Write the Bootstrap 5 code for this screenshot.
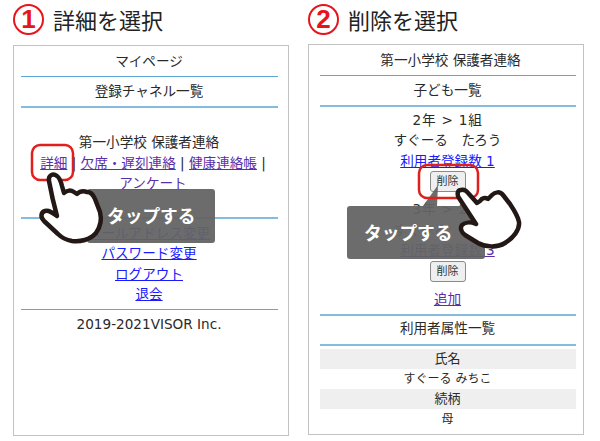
<!DOCTYPE html>
<html lang="ja">
<head>
<meta charset="utf-8">
<title>手順</title>
<link href="https://cdn.jsdelivr.net/npm/bootstrap@5.3.0/dist/css/bootstrap.min.css" rel="stylesheet">
<style>
html,body{height:441px;overflow:hidden;background:#fff}
body{position:relative;font-family:"DejaVu Sans","Noto Sans CJK JP",sans-serif;font-size:13.6px;line-height:20.5px;color:#2a2a2a}
.guide-wrap{padding:4px 16px 0 13px;gap:19px}
.guide-col{width:276px}
.step-head{height:41px;gap:9px}
.step-head-b{height:40px}
.step-num{width:31px;height:31px;border:2px solid #e8141c;border-radius:50%;color:#e8141c;font:700 26px/27px "Liberation Sans",sans-serif}
.step-title{font-family:"Noto Sans CJK JP",sans-serif;font-size:22px;font-weight:400;line-height:30px;color:#222}
.phone{height:391px;border:1.5px solid #c2c2c2;padding:5px 10.5px 0 6.5px;background:#fff}
.phone-b{padding:5px 7.5px 0 10.5px}
.rule{margin:4.5px 0 4px;border:0;border-top:1.5px solid #5ea8d6;opacity:1}
.rule-lg{border-top-width:2px;border-color:#85bbdf}
.rule-tight{margin-bottom:2.5px}
.rule-flush{margin-bottom:2px}
.rule-end{margin:5.5px 0 3px}
.gap-t{margin-top:24px}
.gap-b{margin-bottom:23px}
.nudge{padding-left:6px}
.link-row{padding:0 4px 0 12px}
.grade{letter-spacing:.8px}
a.vis{color:#5b2fa8}
a.lnk{color:#1a1aff}
.del-btn{width:36px;height:21px;font-size:11px;line-height:13px;padding:0;border:1px solid #8a8a8a;border-radius:3px;background:#efefef;color:#333}
.del-gap{margin-bottom:7px}
.attr-list{line-height:20px}
.attr-name{background:#efefef;font-size:13px}
.attr-val{font-size:12px}
.callout{position:absolute;background:rgba(100,100,100,.95);border-radius:3px;color:#fff;font:700 17.7px/1 "Noto Sans CJK JP",sans-serif;display:flex;align-items:center}
.callout-a{left:87px;top:189px;width:128px;height:54px;padding-left:20px}
.callout-b{left:347px;top:206px;width:138px;height:53px;padding-left:17px}
.overlay-svg{position:absolute;left:0;top:0;pointer-events:none}
</style>
</head>
<body>
<div class="d-flex guide-wrap">
  <section class="guide-col">
    <div class="d-flex align-items-start step-head">
      <span class="step-num text-center flex-shrink-0">1</span>
      <h2 class="step-title m-0">詳細を選択</h2>
    </div>
    <div class="phone text-center">
      <div>マイページ</div>
      <hr class="rule">
      <div>登録チャネル一覧</div>
      <hr class="rule rule-lg">
      <div class="gap-t">第一小学校 保護者連絡</div>
      <div class="gap-b link-row"><a class="vis" href="#">詳細</a> | <a class="vis" href="#">欠席・遅刻連絡</a> | <a class="vis" href="#">健康連絡帳</a> | <a class="vis text-nowrap" href="#">アンケート</a></div>
      <hr class="rule rule-lg">
      <div><a class="lnk" href="#">メールアドレス変更</a></div>
      <div><a class="lnk" href="#">パスワード変更</a></div>
      <div><a class="lnk" href="#">ログアウト</a></div>
      <div><a class="lnk" href="#">退会</a></div>
      <hr class="rule">
      <div>2019-2021VISOR Inc.</div>
    </div>
  </section>
  <section class="guide-col">
    <div class="d-flex align-items-start step-head step-head-b">
      <span class="step-num text-center flex-shrink-0">2</span>
      <h2 class="step-title m-0">削除を選択</h2>
    </div>
    <div class="phone phone-b text-center">
      <div class="nudge">第一小学校 保護者連絡</div>
      <hr class="rule">
      <div>子ども一覧</div>
      <hr class="rule rule-lg rule-tight">
      <div class="grade">2年 &gt; 1組</div>
      <div>すぐーる　たろう</div>
      <div><a class="lnk" href="#">利用者登録数 1</a></div>
      <div class="del-gap d-flex justify-content-center"><button type="button" class="del-btn">削除</button></div>
      <div class="grade">3年 &gt; 2組</div>
      <div>すぐーる　はなこ</div>
      <div><a class="vis" href="#">利用者登録数 3</a></div>
      <div class="del-gap d-flex justify-content-center"><button type="button" class="del-btn">削除</button></div>
      <div><a class="vis" href="#">追加</a></div>
      <hr class="rule rule-lg rule-flush">
      <div>利用者属性一覧</div>
      <hr class="rule rule-lg rule-end">
      <div class="attr-list">
        <div class="attr-name">氏名</div>
        <div class="attr-val">すぐーる みちこ</div>
        <div class="attr-name">続柄</div>
        <div class="attr-val">母</div>
      </div>
    </div>
  </section>
</div>
<div class="callout callout-a">タップする</div>
<div class="callout callout-b">タップする</div>
<svg class="overlay-svg" width="600" height="441" viewBox="0 0 600 441" fill="none">
  <polygon points="438,185 423,206 437,206" fill="#646464" fill-opacity=".95"/>
  <rect x="32" y="145" width="41" height="35" rx="8" stroke="#e0201c" stroke-width="2.5"/>
  <rect x="419" y="165" width="59" height="33" rx="8" stroke="#e0201c" stroke-width="2.5"/>
  <path d="M49 181C48 175 53 173 57 176C60 178 61 182 62 186L64 193C67 190 71 190 74 192L77 194C80 191 84 191 87 192C91 192 93 194 95 199L100 212C102 220 101 226 96 233C90 240 80 242 72 241C66 240 62 238 58 234L44 221C40 217 41 212 45 211C49 210 53 213 57 216C54 205 51 192 49 181Z" fill="#fff" stroke="#231815" stroke-width="4.5" stroke-linejoin="round"/>
  <path d="M461 190C457 190 457 195 459 198L476 224C471 222 465 222 462 225C460 228 461 232 465 235L478 243C485 247 497 248 505 243C513 238 520 230 519 222C518 216 514 210 510 204L503 195C500 191 495 192 492 195L488 199C485 197 482 198 480 201L477 203L469 194C466 190 464 189 461 190Z" fill="#fff" stroke="#231815" stroke-width="4.5" stroke-linejoin="round"/>
</svg>
<script src="https://cdn.jsdelivr.net/npm/bootstrap@5.3.0/dist/js/bootstrap.bundle.min.js"></script>
</body>
</html>
